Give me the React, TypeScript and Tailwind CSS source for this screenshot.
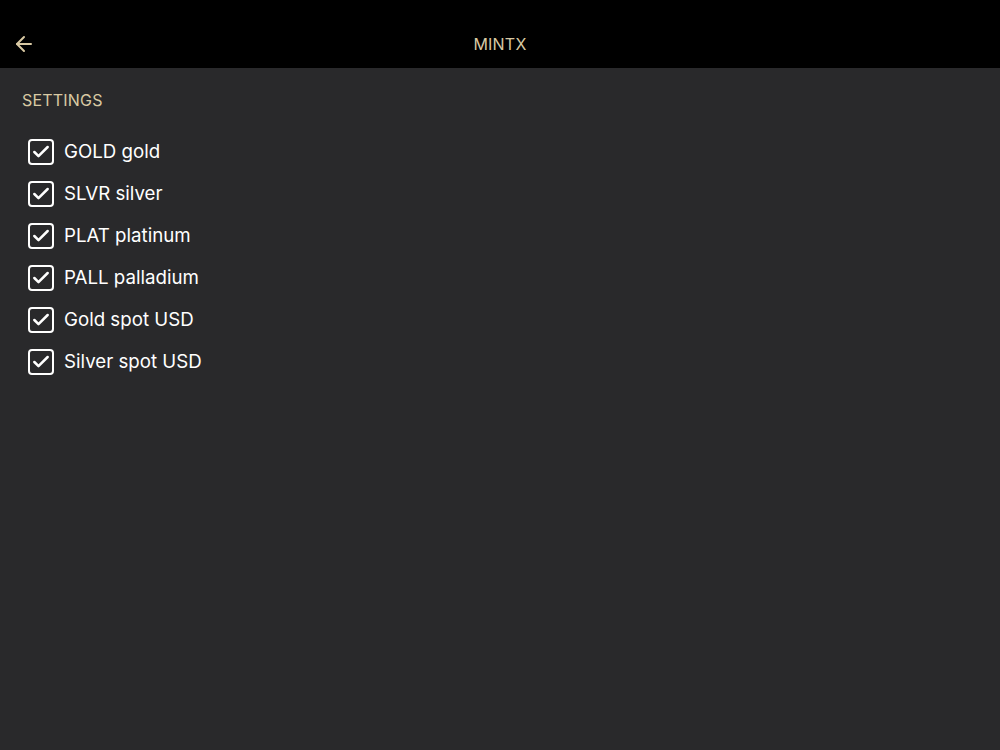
import { ArrowLeft, Check } from "lucide-react";

const items = [
  "GOLD gold",
  "SLVR silver",
  "PLAT platinum",
  "PALL palladium",
  "Gold spot USD",
  "Silver spot USD",
];

export default function App() {
  return (
    <div
      className="w-[1000px] h-[750px] bg-[#29292b] flex flex-col"
      style={{ fontFamily: "Inter, 'Noto Sans', sans-serif" }}
    >
      <header className="h-[68px] pt-[20px] bg-black flex items-center relative shrink-0">
        <button className="absolute left-[12px] top-[44px] -translate-y-1/2 text-[#d9c9a3]">
          <ArrowLeft size={24} strokeWidth={2} />
        </button>
        <h1 className="w-full text-center text-[16px] text-[#d9c9a3] tracking-[0.2px]">MINTX</h1>
      </header>
      <main className="px-[22px] pt-[22px] flex flex-col">
        <h2 className="text-[16px] text-[#d9c9a3] leading-[20px] tracking-[0.2px]">SETTINGS</h2>
        <ul className="mt-[29px] flex flex-col gap-[16px] pl-[6px]">
          {items.map((item) => (
            <li key={item} className="flex items-center gap-[10px] h-[26px]">
              <span className="w-[26px] h-[26px] rounded-[4px] border-[2.5px] border-white flex items-center justify-center shrink-0">
                <Check size={20} strokeWidth={3} className="text-white" />
              </span>
              <span className="text-[18.7px] text-white leading-[26px]">{item}</span>
            </li>
          ))}
        </ul>
      </main>
    </div>
  );
}
